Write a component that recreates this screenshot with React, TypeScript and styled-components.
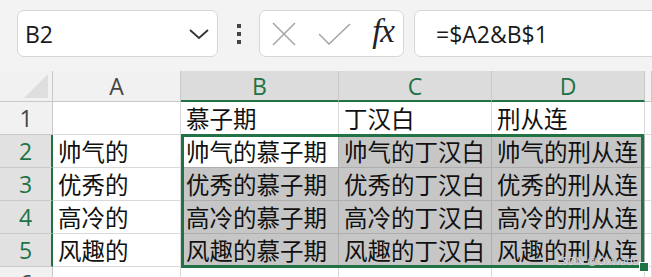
import React from "react";
import styled, { createGlobalStyle, css } from "styled-components";

const GREEN = "#217346";
const UI = `"Open Sans", "Noto Sans", "Noto Sans CJK SC", sans-serif`;
const CJK = `"Noto Sans CJK SC", "Noto Sans", sans-serif`;

const Global = createGlobalStyle`
  html, body { margin: 0; padding: 0; background: #f3f3f3; overflow: hidden; }
  #root { width: 652px; height: 277px; overflow: hidden; }
`;

const Page = styled.div`
  position: relative;
  width: 652px;
  height: 277px;
  overflow: hidden;
  background: #f3f3f3;
  font-family: ${UI};
`;

const TopBar = styled.div`
  height: 71px;
  box-sizing: border-box;
  padding: 10px 0 0 17px;
  display: flex;
  align-items: flex-start;
`;

const Box = styled.div`
  box-sizing: border-box;
  height: 47px;
  background: #fff;
  border: 1px solid #d6d6d6;
  border-radius: 7px;
  display: flex;
  align-items: center;
`;

const NameBox = styled(Box)`
  width: 201px;
  padding: 0 7px 0 7px;
  justify-content: space-between;
  font-size: 23px;
  color: #1a1a1a;
`;

const Dots = styled.div`
  width: 41px;
  height: 47px;
  display: flex;
  flex-direction: column;
  align-items: center;
  justify-content: center;
  gap: 4px;
  span {
    width: 4px;
    height: 4px;
    background: #444;
    display: block;
  }
`;

const FxBox = styled(Box)`
  width: 145px;
  padding: 0 9px 0 11px;
  justify-content: space-between;
`;

const Fx = styled.span`
  font-family: "Liberation Serif", "DejaVu Serif", serif;
  font-style: italic;
  font-size: 33px;
  color: #222;
  line-height: 1;
  margin-top: -4px;
  letter-spacing: -1px;
`;

const FormulaBox = styled(Box)`
  flex: 1;
  margin-left: 10px;
  margin-right: -12px;
  padding-left: 21px;
  font-size: 23px;
  color: #1a1a1a;
`;

const Grid = styled.div`
  display: grid;
  grid-template-columns: 53px 128px 158px 153px 153px 1fr;
  grid-template-rows: 31px 33px 33px 33px 33px 33px 33px;
`;

type Pos = { $r: number; $c: number };

const place = css<Pos>`
  grid-row: ${(p) => p.$r};
  grid-column: ${(p) => p.$c};
`;

const HeaderCell = styled.div<Pos & { $sel?: boolean; $col?: boolean }>`
  ${place};
  box-sizing: border-box;
  display: flex;
  align-items: center;
  justify-content: center;
  font-family: ${UI};
  font-size: 23px;
  background: ${(p) => (p.$sel ? "#dcdcdc" : "#f1f1f1")};
  color: ${(p) => (p.$sel ? GREEN : "#444")};
  border-right: 1px solid #c9c9c9;
  border-bottom: 1px solid #c9c9c9;
  ${(p) =>
    p.$sel &&
    p.$col &&
    css`
      border-bottom: 2px solid ${GREEN};
    `}
  ${(p) =>
    p.$sel &&
    !p.$col &&
    css`
      border-right: 2px solid ${GREEN};
      background: #e1e1e1;
    `}
`;

const Corner = styled(HeaderCell)`
  align-items: flex-end;
  justify-content: flex-end;
  padding: 0 4px 3px 0;
  background: #f1f1f1;
`;

const Cell = styled.div<Pos & { $sel?: boolean; $active?: boolean }>`
  ${place};
  box-sizing: border-box;
  display: flex;
  align-items: center;
  padding-left: 5px;
  font-family: ${CJK};
  font-size: 23.5px;
  color: #111;
  white-space: nowrap;
  overflow: hidden;
  background: ${(p) => (p.$sel && !p.$active ? "#c6c6c6" : "#fff")};
  border-right: 1px solid ${(p) => (p.$sel ? "#aeaeae" : "#d9d9d9")};
  border-bottom: 1px solid ${(p) => (p.$sel ? "#aeaeae" : "#d9d9d9")};
`;

const Selection = styled.div`
  grid-column: 3 / 6;
  grid-row: 3 / 7;
  position: relative;
  z-index: 2;
  margin: -1px 1px -1px 0;
  border: 3px solid ${GREEN};
  pointer-events: none;
`;

const FillHandle = styled.div`
  position: absolute;
  right: -8px;
  bottom: -7px;
  width: 8px;
  height: 8px;
  background: ${GREEN};
  border: 1px solid #fff;
`;

const Watermark = styled.div`
  position: absolute;
  right: 14px;
  bottom: 9px;
  font-family: ${UI};
  font-size: 11px;
  color: rgba(255, 255, 255, 0.75);
  text-shadow: 0 0 1px #777;
  z-index: 3;
`;

const cols = ["A", "B", "C", "D"];
const namesA = ["帅气的", "优秀的", "高冷的", "风趣的"];
const names1 = ["慕子期", "丁汉白", "刑从连"];

export default function App() {
  return (
    <Page>
      <Global />
      <TopBar>
        <NameBox>
          <span>B2</span>
          <svg width="22" height="12" viewBox="0 0 22 12">
            <path d="M2 2 L11 10 L20 2" fill="none" stroke="#333" strokeWidth="1.8" />
          </svg>
        </NameBox>
        <Dots>
          <span />
          <span />
          <span />
        </Dots>
        <FxBox>
          <svg width="26" height="26" viewBox="0 0 26 26">
            <path d="M2 2 L24 24 M24 2 L2 24" stroke="#a8a8a8" strokeWidth="1.6" fill="none" />
          </svg>
          <svg width="33" height="22" viewBox="0 0 33 22">
            <path d="M1 11 L11 21 L32 1" stroke="#a8a8a8" strokeWidth="1.6" fill="none" />
          </svg>
          <Fx>fx</Fx>
        </FxBox>
        <FormulaBox>=$A2&amp;B$1</FormulaBox>
      </TopBar>
      <Grid>
        <Corner $r={1} $c={1}>
          <svg width="24" height="24" viewBox="0 0 24 24">
            <path d="M24 0 L24 24 L0 24 Z" fill="#dedede" />
          </svg>
        </Corner>
        {cols.map((c, i) => (
          <HeaderCell key={c} $r={1} $c={i + 2} $sel={i > 0} $col>
            {c}
          </HeaderCell>
        ))}
        <HeaderCell $r={1} $c={6} $col />

        <HeaderCell $r={2} $c={1}>1</HeaderCell>
        <Cell $r={2} $c={2} />
        {names1.map((n, c) => (
          <Cell key={n} $r={2} $c={c + 3}>
            {n}
          </Cell>
        ))}
        <Cell $r={2} $c={6} />

        {namesA.map((a, r) => (
          <React.Fragment key={a}>
            <HeaderCell $r={r + 3} $c={1} $sel>
              {r + 2}
            </HeaderCell>
            <Cell $r={r + 3} $c={2}>{a}</Cell>
            {names1.map((n, c) => (
              <Cell key={n} $r={r + 3} $c={c + 3} $sel $active={r === 0 && c === 0}>
                {a + n}
              </Cell>
            ))}
            <Cell $r={r + 3} $c={6} />
          </React.Fragment>
        ))}

        <HeaderCell $r={7} $c={1}>6</HeaderCell>
        {[2, 3, 4, 5, 6].map((c) => (
          <Cell key={c} $r={7} $c={c} />
        ))}

        <Selection>
          <FillHandle />
        </Selection>
      </Grid>
      <Watermark>CSDN @Oxwads</Watermark>
    </Page>
  );
}
